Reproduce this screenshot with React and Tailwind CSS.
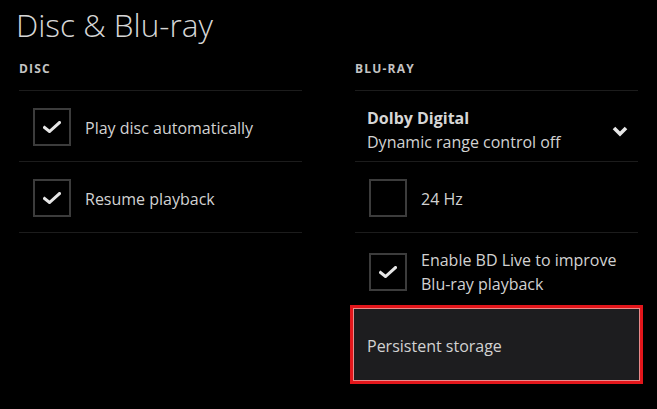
const font = { fontFamily: '"Open Sans", "Noto Sans", sans-serif' };

const Check = () => (
    <svg width="18" height="12" viewBox="0 0 18 12" fill="none">
        <path d="M1.5 6.5 L6.5 10.5 L16.5 1.5" stroke="#e6e6e6" strokeWidth="3" strokeLinecap="square" />
    </svg>
);

const Checkbox = ({ checked }) => (
    <div className="w-[38px] h-[38px] shrink-0 border-2 border-[#3c3c3c] flex items-center justify-center">
        {checked && <Check />}
    </div>
);

const Chevron = () => (
    <svg width="16" height="12" viewBox="0 0 16 12" fill="none">
        <path d="M2 3 L8 9 L14 3" stroke="#e6e6e6" strokeWidth="3.6" />
    </svg>
);

const CheckRow = ({ checked, children }) => (
    <div className="flex items-center gap-[14px] pl-[14px] h-[71px] pt-[1px] border-b border-[#1c1c1c]">
        <Checkbox checked={checked} />
        <span className="text-[16px] leading-[24px] text-[#d2d2d2] pt-[2px]">{children}</span>
    </div>
);

const SectionHeader = ({ children }) => (
    <div className="h-[36px] pt-[5px] border-b border-[#1c1c1c] text-[12px] font-bold tracking-[0.1em] text-[#c4c4c4]">
        {children}
    </div>
);

const App = () => {
    return (
        <div className="w-[657px] h-[409px] bg-black overflow-hidden" style={font}>
            <h1 className="pl-[16px] pt-[4px] h-[55px] text-[31.5px] leading-[42px] font-light text-[#d6d6d6]">
                Disc &amp; Blu-ray
            </h1>

            <div className="grid grid-cols-[283px_283px] gap-x-[53px] pl-[19px]">
                <div className="flex flex-col">
                    <SectionHeader>DISC</SectionHeader>
                    <CheckRow checked>Play disc automatically</CheckRow>
                    <CheckRow checked>Resume playback</CheckRow>
                </div>

                <div className="flex flex-col">
                    <SectionHeader>BLU-RAY</SectionHeader>
                    <div className="flex items-center justify-between h-[71px] pt-[8px] pl-[12px] pr-[10px] border-b border-[#1c1c1c]">
                        <div className="flex flex-col">
                            <span className="text-[16px] leading-[24px] font-bold text-[#d6d6d6]">Dolby Digital</span>
                            <span className="text-[16px] leading-[24px] text-[#d2d2d2]">Dynamic range control off</span>
                        </div>
                        <div className="mt-[2px]">
                            <Chevron />
                        </div>
                    </div>
                    <CheckRow>24 Hz</CheckRow>
                    <div className="flex items-center gap-[14px] pl-[14px] h-[72px] pt-[6px]">
                        <Checkbox checked />
                        <span className="text-[16px] leading-[24px] text-[#d2d2d2]">
                            Enable BD Live to improve<br />Blu-ray playback
                        </span>
                    </div>
                    <div className="-mx-[5px] h-[79px] pt-[3px] border-[3px] border-[#e3161b] shadow-[inset_0_0_0_1px_#e98a8a] bg-[#1d1d1f] flex items-center pl-[14px]">
                        <span className="text-[16px] leading-[24px] text-[#d2d2d2]">Persistent storage</span>
                    </div>
                </div>
            </div>
        </div>
    );
};

export default App;
